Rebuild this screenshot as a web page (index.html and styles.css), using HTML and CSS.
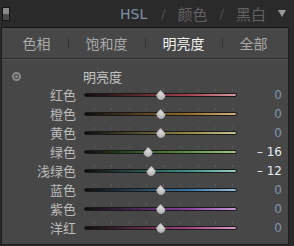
FILE: index.html
```html
<!DOCTYPE html>
<html lang="zh-CN">
<head>
    <meta charset="UTF-8">
    <title>HSL</title>
    <link rel="stylesheet" href="styles.css">
</head>
<body>
    <header class="panel-head">
        <span class="switch"></span>
        <nav class="modes">
            <span class="mode active">HSL</span>
            <span class="slash">/</span>
            <span class="mode">颜色</span>
            <span class="slash">/</span>
            <span class="mode">黑白</span>
        </nav>
        <span class="collapse"></span>
    </header>

    <section class="panel">
        <div class="tabs">
            <span class="tab">色相</span>
            <span class="sep"></span>
            <span class="tab">饱和度</span>
            <span class="sep"></span>
            <span class="tab current">明亮度</span>
            <span class="sep"></span>
            <span class="tab">全部</span>
        </div>

        <div class="body">
            <div class="title-row">
                <span class="target"></span>
                <span class="title">明亮度</span>
            </div>
            <div class="sliders"></div>
        </div>
    </section>

    <script>
        // colour channels and their luminance values
        const channels = [
            { name: "红色", value: 0, color: "#a8424e", end: "#d49aa0" },
            { name: "橙色", value: 0, color: "#9c6e2c", end: "#cfae80" },
            { name: "黄色", value: 0, color: "#948c44", end: "#c8c294" },
            { name: "绿色", value: -16, color: "#5e9440", end: "#a4c890" },
            { name: "浅绿色", value: -12, color: "#3e948a", end: "#98ccc4" },
            { name: "蓝色", value: 0, color: "#3a78a8", end: "#94bcdc" },
            { name: "紫色", value: 0, color: "#8c44a4", end: "#c898d8" },
            { name: "洋红", value: 0, color: "#a8447e", end: "#d89cc0" }
        ];

        const list = document.querySelector('.sliders');

        channels.forEach(ch => {
            const row = document.createElement('div');
            row.className = 'slider-row';
            const pos = 50 + ch.value / 2;
            const text = ch.value < 0 ? '\u2013 ' + Math.abs(ch.value) : String(ch.value);
            row.innerHTML = `
                <span class="label">${ch.name}</span>
                <div class="track-wrap">
                    <div class="ticks"><i></i><i></i><i></i><i></i><i></i><i></i><i></i><i></i><i></i></div>
                    <div class="track" style="background: linear-gradient(to right, #0e0e0e, ${ch.color} 70%, ${ch.end})"></div>
                    <span class="thumb" style="left: ${pos}%"></span>
                </div>
                <span class="value${ch.value !== 0 ? ' changed' : ''}">${text}</span>
            `;
            list.appendChild(row);
        });
    </script>
</body>
</html>
```

FILE: styles.css
```css
* {
    margin: 0;
    padding: 0;
    box-sizing: border-box;
}

body {
    width: 294px;
    height: 246px;
    overflow: hidden;
    background: #292929;
    font-family: "Noto Sans CJK SC", "Noto Sans", sans-serif;
    font-size: 13px;
    color: #bcbcbc;
}

.panel-head {
    height: 27px;
    display: flex;
    align-items: center;
    padding: 0 8px 0 2px;
    background: #2a2a2a;
}

.switch {
    width: 8px;
    height: 14px;
    border: 1px solid #151515;
    background: linear-gradient(#8a8a8a 0, #8a8a8a 45%, #4a4a4a 55%, #4a4a4a 100%);
}

.modes {
    margin-left: auto;
    display: flex;
    align-items: center;
    gap: 9px;
    font-size: 15px;
    color: #626262;
}

.mode.active {
    color: #7f93a8;
    font-family: "DejaVu Sans", sans-serif;
    font-size: 14px;
    margin-right: 2px;
}

.slash {
    font-family: "DejaVu Sans", sans-serif;
    font-size: 13px;
    color: #4f4f4f;
    margin: 0 3px;
}

.collapse {
    margin-left: 12px;
    width: 0;
    height: 0;
    border-left: 4px solid transparent;
    border-right: 4px solid transparent;
    border-top: 7px solid #9a9a9a;
}

.panel {
    margin: 0 5px 0 1px;
    height: 218px;
    border: 1px solid #1e1e1e;
    border-top-color: #141414;
    background: #474747;
}

.tabs {
    height: 31px;
    display: flex;
    align-items: center;
    justify-content: space-around;
    padding: 0 12px;
    border-bottom: 1px solid #2a2a2a;
    font-size: 14px;
    color: #a9a9a9;
}

.tab.current {
    color: #f2f2f2;
}

.sep {
    width: 1px;
    height: 10px;
    background: #343434;
}

.body {
    padding-top: 7px;
    border-top: 1px solid #555;
}

.title-row {
    height: 18px;
    display: flex;
    align-items: center;
    padding-left: 10px;
}

.target {
    width: 9px;
    height: 9px;
    border-radius: 50%;
    border: 2px solid #8a8a8a;
    position: relative;
}

.target::after {
    content: "";
    position: absolute;
    left: 1px;
    top: 1px;
    width: 3px;
    height: 3px;
    border-radius: 50%;
    background: #8a8a8a;
}

.title {
    margin-left: 62px;
    color: #c4c4c4;
}

.sliders {
    display: flex;
    flex-direction: column;
}

.slider-row {
    height: 19px;
    display: flex;
    align-items: center;
}

.label {
    width: 74px;
    text-align: right;
}

.track-wrap {
    position: relative;
    margin-left: 8px;
    width: 153px;
    height: 19px;
}

.ticks {
    position: absolute;
    left: 10px;
    right: 4px;
    top: 4px;
    display: flex;
    justify-content: space-between;
}

.ticks i {
    width: 1px;
    height: 2px;
    background: #5c5c5c;
}

.track {
    position: absolute;
    left: 0;
    right: 0;
    top: 8px;
    height: 4px;
    border: 1px solid #1a1a1a;
    border-radius: 2px;
}

.thumb {
    position: absolute;
    top: 5px;
    width: 10px;
    height: 10px;
    margin-left: -5px;
    background: radial-gradient(circle at 50% 40%, #dcdcdc, #9c9c9c);
    border-radius: 50% 50% 50% 50% / 30% 30% 70% 70%;
    clip-path: polygon(50% 0, 100% 55%, 100% 100%, 0 100%, 0 55%);
}

.value {
    width: 45px;
    text-align: right;
    font-family: "DejaVu Sans", sans-serif;
    font-size: 12px;
    color: #8194aa;
}

.value.changed {
    color: #e6eef6;
}
```
